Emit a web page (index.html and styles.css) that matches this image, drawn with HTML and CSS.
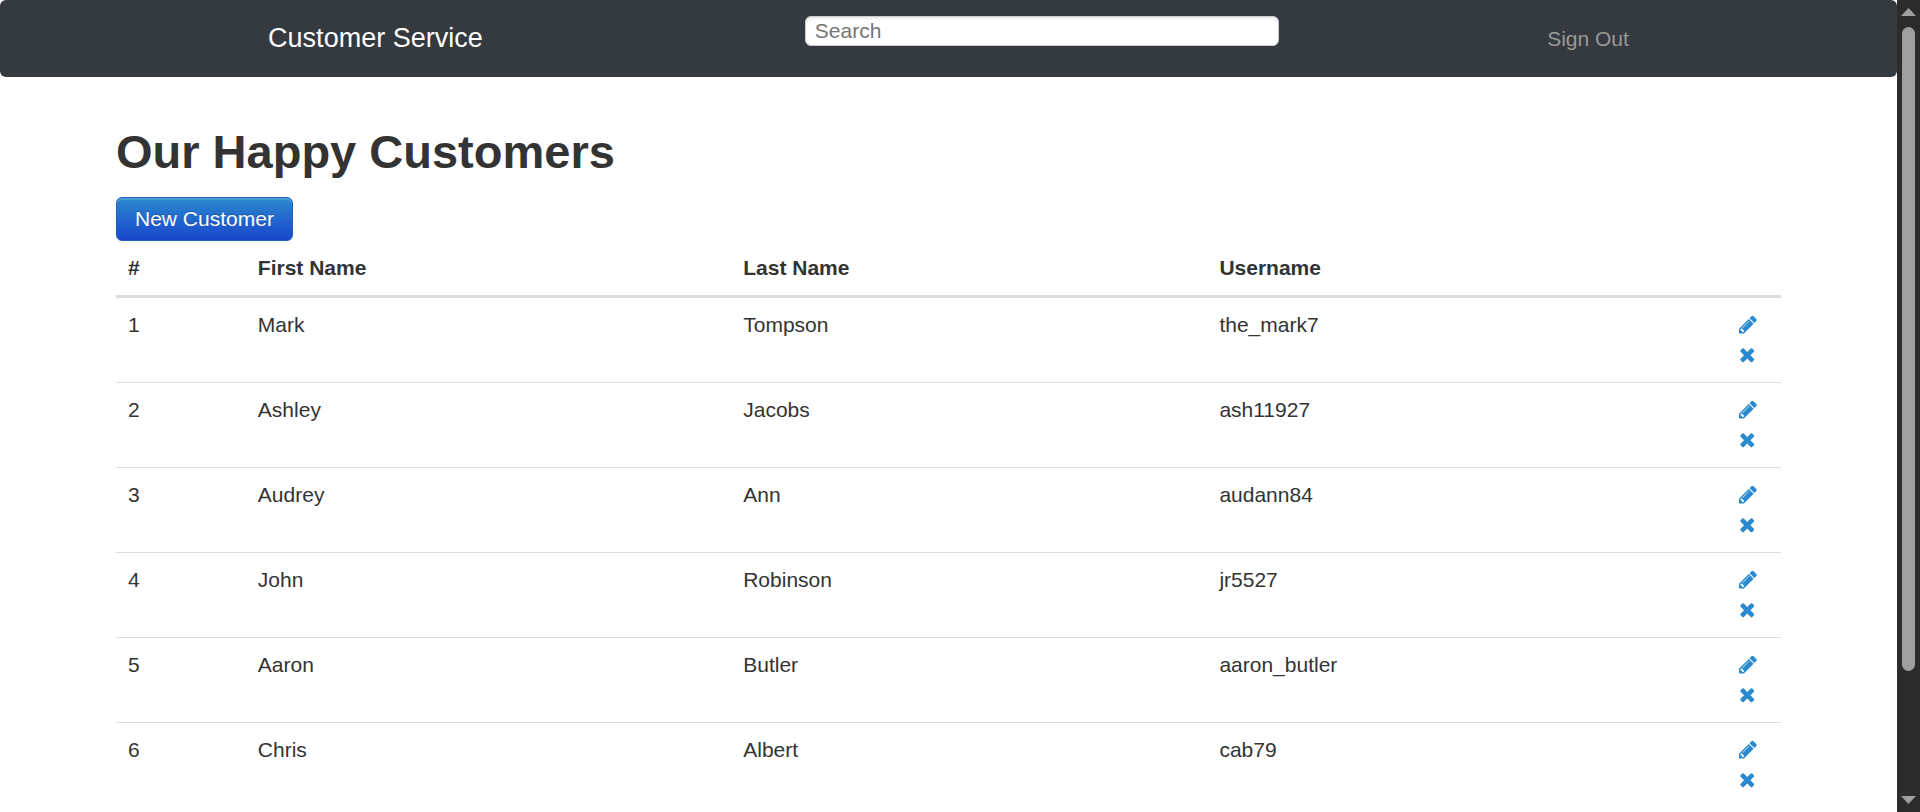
FILE: index.html
```html
<!DOCTYPE html>
<html lang="en">
<head>
<meta charset="utf-8">
<title>Customer Service</title>
<link rel="stylesheet" href="styles.css">
</head>
<body>
<svg class="sprite" aria-hidden="true">
  <symbol id="pencil" viewBox="0 0 1536 1792"><path d="M363 1536l91-91-235-235-91 91v107h128v128h107zm523-928q0-22-22-22-10 0-17 7l-542 542q-7 7-7 17 0 22 22 22 10 0 17-7l542-542q7-7 7-17zm-54-192l416 416-832 832h-416v-416zm683 96q0 53-37 90l-166 166-416-416 166-165q36-38 90-38 53 0 91 38l235 234q37 39 37 91z"/></symbol>
  <symbol id="remove" viewBox="0 0 1536 1792"><path d="M1298 1322q0 40-28 68l-136 136q-28 28-68 28t-68-28l-294-294-294 294q-28 28-68 28t-68-28l-136-136q-28-28-28-68t28-68l294-294-294-294q-28-28-28-68t28-68l136-136q28-28 68-28t68 28l294 294 294-294q28-28 68-28t68 28l136 136q28 28 28 68t-28 68l-294 294 294 294q28 28 28 68z"/></symbol>
</svg>
<div class="page">
  <nav class="navbar">
    <a class="brand" href="#">Customer Service</a>
    <input class="search" type="text" placeholder="Search" aria-label="Search">
    <a class="sign-out" href="#">Sign Out</a>
  </nav>
  <main class="content">
    <h1 class="title">Our Happy Customers</h1>
    <button class="btn" type="button">New Customer</button>
    <table class="table">
      <colgroup><col class="col-id"><col class="col-first"><col class="col-last"><col class="col-user"><col></colgroup>
      <thead>
        <tr><th>#</th><th>First Name</th><th>Last Name</th><th>Username</th><th></th></tr>
      </thead>
      <tbody>
        <tr><td>1</td><td>Mark</td><td>Tompson</td><td>the_mark7</td><td><a class="action" href="#" aria-label="Edit"><svg class="icon"><use href="#pencil"/></svg></a><a class="action" href="#" aria-label="Delete"><svg class="icon"><use href="#remove"/></svg></a></td></tr>
        <tr><td>2</td><td>Ashley</td><td>Jacobs</td><td>ash11927</td><td><a class="action" href="#" aria-label="Edit"><svg class="icon"><use href="#pencil"/></svg></a><a class="action" href="#" aria-label="Delete"><svg class="icon"><use href="#remove"/></svg></a></td></tr>
        <tr><td>3</td><td>Audrey</td><td>Ann</td><td>audann84</td><td><a class="action" href="#" aria-label="Edit"><svg class="icon"><use href="#pencil"/></svg></a><a class="action" href="#" aria-label="Delete"><svg class="icon"><use href="#remove"/></svg></a></td></tr>
        <tr><td>4</td><td>John</td><td>Robinson</td><td>jr5527</td><td><a class="action" href="#" aria-label="Edit"><svg class="icon"><use href="#pencil"/></svg></a><a class="action" href="#" aria-label="Delete"><svg class="icon"><use href="#remove"/></svg></a></td></tr>
        <tr><td>5</td><td>Aaron</td><td>Butler</td><td>aaron_butler</td><td><a class="action" href="#" aria-label="Edit"><svg class="icon"><use href="#pencil"/></svg></a><a class="action" href="#" aria-label="Delete"><svg class="icon"><use href="#remove"/></svg></a></td></tr>
        <tr><td>6</td><td>Chris</td><td>Albert</td><td>cab79</td><td><a class="action" href="#" aria-label="Edit"><svg class="icon"><use href="#pencil"/></svg></a><a class="action" href="#" aria-label="Delete"><svg class="icon"><use href="#remove"/></svg></a></td></tr>
      </tbody>
    </table>
  </main>
</div>
<div class="scrollbar" aria-hidden="true">
  <svg class="arrow" viewBox="0 0 15 8"><path d="M7.500 0L15 8H0z"/></svg>
  <div class="track"><div class="thumb"></div></div>
  <svg class="arrow" viewBox="0 0 15 8"><path d="M0 0H15L7.500 8z"/></svg>
</div>
</body>
</html>
```
FILE: styles.css
```css
* {
  box-sizing: border-box;
}

body {
  display: flex;
  height: 100vh;
  margin: 0;
  overflow: hidden;
  background: #fff;
  color: #333;
  font: 21px/30px "Liberation Sans", Arial, sans-serif;
}

.sprite {
  position: absolute;
  width: 0;
  height: 0;
}

.page {
  flex: 1;
  min-width: 0;
  overflow: hidden;
}

.navbar {
  display: flex;
  justify-content: space-evenly;
  align-items: flex-start;
  padding: 16px 0 22px;
  border-radius: 6px;
  background: #343a40;
}

.brand {
  margin: 6px 54px 0 0;
  color: #fff;
  font-size: 27px;
  line-height: 33px;
  text-decoration: none;
}

.search {
  width: 25%;
  height: 30px;
  padding: 0 9px;
  border: 1px solid #ccc;
  border-radius: 6px;
  background: #fff;
  box-shadow: inset 0 2px 2px rgba(0, 0, 0, 0.075);
  color: #555;
  font: inherit;
}

.search::placeholder {
  color: #757575;
}

.sign-out {
  margin-top: 8px;
  color: #999;
  text-decoration: none;
}

.content {
  padding: 45px 116px 0;
}

.title {
  margin: 0 0 15px;
  font-size: 47px;
  line-height: 60px;
}

.btn {
  display: block;
  padding: 6px 18px;
  border: 1px solid #1f63b5;
  border-radius: 6px;
  background: linear-gradient(#2a8bcf, #1944cc) border-box;
  box-shadow: inset 0 2px 0 rgba(255, 255, 255, 0.15), 0 2px 3px rgba(0, 0, 0, 0.05);
  color: #fff;
  font: inherit;
  text-shadow: 0 -1px 0 rgba(0, 0, 0, 0.25);
}

.table {
  width: 100%;
  border-spacing: 0;
  table-layout: fixed;
}

.col-id {
  width: 7.8%;
}

.col-first {
  width: 29.15%;
}

.col-last {
  width: 28.6%;
}

.col-user {
  width: 31.2%;
}

.table th,
.table td {
  padding: 12px;
  text-align: left;
  vertical-align: top;
}

.table th {
  border-bottom: 3px solid #ddd;
}

.table tr + tr td {
  border-top: 1px solid #ddd;
}

.action {
  display: flex;
  height: 30px;
  padding-top: 4px;
}

.icon {
  width: 18px;
  height: 21px;
  fill: #2a8ad0;
}

.scrollbar {
  display: flex;
  flex-direction: column;
  align-items: center;
  width: 23px;
  padding: 8px 0;
  background: #2c2c2c;
}

.arrow {
  width: 15px;
  height: 8px;
  fill: #9f9f9f;
}

.track {
  flex: 1;
  width: 13px;
  padding: 11px 0;
}

.thumb {
  height: 85%;
  border-radius: 7px;
  background: #9f9f9f;
}
```
